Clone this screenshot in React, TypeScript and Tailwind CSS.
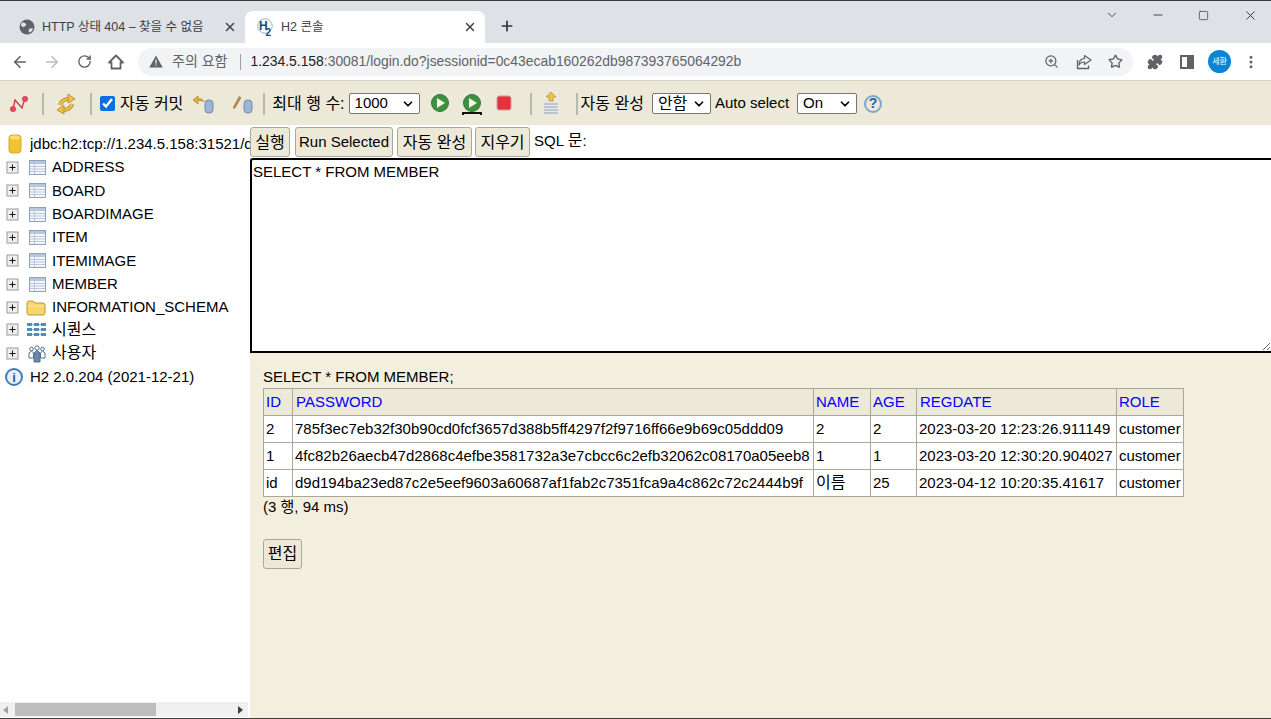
import { ArrowLeft, ArrowRight, ChevronDown, Minus, MoreVertical, Plus, Puzzle, RotateCw, Square, Star, X, ZoomIn } from "lucide-react"

const sans = "font-['Liberation_Sans','Noto_Sans_CJK_KR',sans-serif]"

const tables = ["ADDRESS", "BOARD", "BOARDIMAGE", "ITEM", "ITEMIMAGE", "MEMBER"]

const rows = [
    ["2", "785f3ec7eb32f30b90cd0fcf3657d388b5ff4297f2f9716ff66e9b69c05ddd09", "2", "2", "2023-03-20 12:23:26.911149", "customer"],
    ["1", "4fc82b26aecb47d2868c4efbe3581732a3e7cbcc6c2efb32062c08170a05eeb8", "1", "1", "2023-03-20 12:30:20.904027", "customer"],
    ["id", "d9d194ba23ed87c2e5eef9603a60687af1fab2c7351fca9a4c862c72c2444b9f", "이름", "25", "2023-04-12 10:20:35.41617", "customer"],
]

function Sep({ className }: { className: string }) {
    return <span className={`block shrink-0 w-[2px] h-[22px] bg-[#b9b8ae] ${className}`} />
}

function PlusBox() {
    return (
        <svg width="13" height="13" viewBox="0 0 13 13" className="shrink-0">
            <rect x="1" y="1" width="11" height="11" fill="#eee" stroke="#9a9a9a" />
            <path d="M3.5 6.500h6M6.500 3.500v6" stroke="#111" />
        </svg>
    )
}

function TableIcon() {
    return (
        <svg width="17" height="15" viewBox="0 0 17 15" className="shrink-0">
            <rect x="0.5" y="0.5" width="16" height="14" fill="#f4f6fa" stroke="#8fa3be" />
            <path d="M1 1h15v3H1z" fill="#b8c6da" />
            <path d="M1 6.500h15M1 9h15M1 11.500h15M5.500 4v10" stroke="#bcc8d8" />
        </svg>
    )
}

function Play({ bar, className }: { bar?: boolean; className: string }) {
    return (
        <svg width="24" height="24" viewBox="0 0 24 24" className={`shrink-0 ${className}`}>
            <circle cx="12" cy="11" r="8.500" fill="#3f9142" stroke="#2c7a34" />
            <path d="M9 6l8 5-8 5z" fill="#f2f6ea" />
            {bar && <path d="M3 23v-2h18v2" fill="none" stroke="#111" strokeWidth="2" />}
        </svg>
    )
}

function Cylinder() {
    return <rect x="13" y="6" width="8" height="13" rx="3.500" fill="#9db5d6" stroke="#6f8bb0" />
}

function Btn({ w, className, children }: { w: string; className?: string; children: React.ReactNode }) {
    return (
        <button className={`${w} ${className ?? ""} h-[30px] pt-[1px] shrink-0 bg-[#ece9d8] border border-[#aca899] rounded-[3px] text-black whitespace-nowrap`}>
            {children}
        </button>
    )
}

function Select({ value, w, className }: { value: React.ReactNode; w: string; className: string }) {
    return (
        <span className={`${w} ${className} h-[21px] shrink-0 flex items-center justify-between pl-[5px] pr-[4px] bg-white border border-[#767676] rounded-[2px]`}>
            {value}
            <ChevronDown size={14} strokeWidth={3} />
        </span>
    )
}

export default function App() {
    return (
        <div className={`${sans} w-[1271px] h-[719px] overflow-hidden flex flex-col bg-white text-black border-y border-[#3c3c3c]`}>
            {/* chrome tabs */}
            <div className="h-[42px] shrink-0 flex items-end bg-[#dee1e6] text-[#3c4043]">
                <div className="w-[237px] h-[32px] ml-[8px] flex items-center pl-[11px] pr-[8px] text-[12.5px]">
                    <svg width="16" height="16" viewBox="0 0 16 16" className="shrink-0">
                        <circle cx="8" cy="8" r="7.500" fill="#5f6368" />
                        <path d="M3 3.500c2 0 3 .5 4 1.500s-1 2-2 3-2-2-3.500-1zM10 10c1-1 3-1 4-.5-.5 2-1.500 3.500-3.500 4-1 0-1-2.500-.5-3.500z" fill="#dee1e6" />
                    </svg>
                    <span className="ml-[7px] whitespace-nowrap">HTTP 상태 404 – 찾을 수 없음</span>
                    <X size={14} strokeWidth={2.5} className="ml-auto text-[#444]" />
                </div>
                <div className="w-[240px] h-[32px] flex items-center pl-[12px] pr-[8px] bg-white rounded-t-[8px] text-[12.5px]">
                    <svg width="17" height="18" viewBox="0 0 17 18" className="shrink-0">
                        <circle cx="8" cy="8" r="7.200" fill="#fff" stroke="#8fb4c9" />
                        <text x="2" y="12" fontSize="12" fontWeight="700" fill="#174f73">H</text>
                        <text x="8.500" y="17.500" fontSize="10" fontWeight="700" fill="#174f73">2</text>
                    </svg>
                    <span className="ml-[7px]">H2 콘솔</span>
                    <X size={14} strokeWidth={2.5} className="ml-auto text-[#444]" />
                </div>
                <Plus size={16} strokeWidth={2.5} className="ml-[14px] mb-[9px] text-[#333]" />
                <div className="ml-auto self-start flex items-center h-[28px] text-[#333]">
                    <ChevronDown size={14} strokeWidth={1.5} className="mr-[32px]" />
                    <Minus size={14} strokeWidth={1.5} className="mr-[33px]" />
                    <Square size={11} strokeWidth={1.5} className="mr-[34px]" />
                    <X size={15} strokeWidth={1.5} className="mr-[13px]" />
                </div>
            </div>

            {/* address bar */}
            <div className="h-[37px] shrink-0 flex items-center bg-white text-[#5f6368]">
                <ArrowLeft size={18} strokeWidth={2.2} className="ml-[11px]" />
                <ArrowRight size={18} strokeWidth={2.2} className="ml-[14px] text-[#bcbfc4]" />
                <RotateCw size={15} strokeWidth={2.2} className="ml-[16px]" />
                <svg width="18" height="18" viewBox="0 0 18 18" className="ml-[15px] shrink-0">
                    <path d="M2 9.500 9 2.500l7 7h-2.500v6h-9v-6z" fill="none" stroke="#5f6368" strokeWidth="1.800" strokeLinejoin="round" />
                </svg>
                <div className="w-[995px] h-[28px] ml-[13px] flex items-center rounded-full bg-[#f1f3f4] text-[14px]">
                    <svg width="14" height="13" viewBox="0 0 14 13" className="ml-[11px] shrink-0">
                        <path d="M7 0.500 13.700 12.500H0.300z" fill="#5f6368" />
                        <path d="M6.400 4.500h1.200v4.300H6.400zM6.400 9.600h1.200v1.200H6.400z" fill="#f1f3f4" />
                    </svg>
                    <span className="ml-[9px] whitespace-nowrap">주의 요함</span>
                    <span className="w-px h-[16px] ml-[13px] bg-[#9aa0a6]" />
                    <span className="ml-[9px] whitespace-nowrap text-[13.9px]">
                        <span className="text-[#202124]">1.234.5.158</span>:30081/login.do?jsessionid=0c43ecab160262db987393765064292b
                    </span>
                    <ZoomIn size={15} className="ml-auto" />
                    <svg width="16" height="16" viewBox="0 0 16 16" className="ml-[17px] shrink-0">
                        <path d="M8.500 1.500 15 6l-6.500 4.500V8C5.500 8 4 9 3 11c0-4 2-6.500 5.500-6.500z" fill="none" stroke="#5f6368" strokeWidth="1.200" strokeLinejoin="round" />
                        <path d="M1.500 6v8.500h11V11.500" fill="none" stroke="#5f6368" strokeWidth="1.300" />
                    </svg>
                    <Star size={15} strokeWidth={2.2} className="ml-[16px] mr-[10px]" />
                </div>
                <Puzzle size={16} fill="#5f6368" className="ml-[14px]" />
                <span className="w-[14px] h-[14px] ml-[17px] flex justify-end border-2 border-[#5f6368]"><span className="w-[5px] bg-[#5f6368]" /></span>
                <span className="w-[23px] h-[23px] ml-[14px] flex items-center justify-center rounded-full bg-[#0b84d6] text-white text-[8px]">세환</span>
                <MoreVertical size={16} strokeWidth={2.5} className="ml-[12px]" />
            </div>

            {/* h2 toolbar */}
            <div className="h-[45px] shrink-0 flex items-center pt-[1px] bg-[#ece9d8] border-t border-[#d8d5c6] text-[15px]">
                <svg width="20" height="20" viewBox="0 0 20 20" className="ml-[9px] shrink-0">
                    <path d="M4 15 6 6l7 8 3-10" fill="none" stroke="#c8384a" strokeWidth="1.300" />
                    <circle cx="4" cy="15" r="3" fill="#e0475a" />
                    <circle cx="16" cy="5" r="3" fill="#e0475a" />
                </svg>
                <Sep className="ml-[13px]" />
                <svg width="22" height="22" viewBox="0 0 22 22" className="ml-[11px] shrink-0">
                    <path d="M5 12C6 8 10 6 14 6" fill="none" stroke="#a98522" strokeWidth="4" />
                    <path d="M17 11c-1 4-5 6-9 6" fill="none" stroke="#a98522" strokeWidth="4" />
                    <path d="M5 12C6 8 10 6 14 6" fill="none" stroke="#eec24a" strokeWidth="2.600" />
                    <path d="M17 11c-1 4-5 6-9 6" fill="none" stroke="#eec24a" strokeWidth="2.600" />
                    <path d="M13 1l7 5-7 4z" fill="#eec24a" stroke="#a98522" strokeWidth=".8" />
                    <path d="M9 21l-7-4 7-5z" fill="#eec24a" stroke="#a98522" strokeWidth=".8" />
                </svg>
                <Sep className="ml-[13px]" />
                <input type="checkbox" defaultChecked readOnly className="w-[15px] h-[15px] m-0 ml-[8px] shrink-0 accent-[#0b6fde]" />
                <span className="ml-[5px] text-[16px] whitespace-nowrap">자동 커밋</span>
                <svg width="22" height="20" viewBox="0 0 22 20" className="ml-[9px] shrink-0">
                    <path d="M1 6l5-4v2.500c3 0 5 1 6 3-2-1-4-1-6-1V10z" fill="#e3b23c" stroke="#a98522" strokeWidth=".7" />
                    <Cylinder />
                </svg>
                <svg width="22" height="20" viewBox="0 0 22 20" className="ml-[17px] shrink-0">
                    <path d="M2 13 8 2l2.500 1.500-6 10.500-2.500 1z" fill="#b08a58" />
                    <Cylinder />
                </svg>
                <Sep className="ml-[10px]" />
                <span className="ml-[7px] text-[16px] whitespace-nowrap">최대 행 수:</span>
                <Select value="1000" w="w-[71px]" className="ml-[4px]" />
                <Play className="ml-[8px]" />
                <Play bar className="ml-[8px]" />
                <svg width="20" height="20" viewBox="0 0 20 20" className="ml-[10px] shrink-0">
                    <rect x="3" y="2" width="14" height="14" rx="2" fill="#e8303c" stroke="#c9a0a0" />
                </svg>
                <Sep className="ml-[16px]" />
                <svg width="20" height="26" viewBox="0 0 20 26" className="ml-[9px] shrink-0">
                    <path d="M10 1l5 5h-3v4H8V6H5z" fill="#eec24a" stroke="#b58f2b" strokeWidth=".7" />
                    <path d="M3 13h14M3 16h14M3 19h14M3 22h14" stroke="#a9b8d0" strokeWidth="1.500" />
                </svg>
                <Sep className="ml-[15px]" />
                <span className="ml-[3px] text-[16px] whitespace-nowrap">자동 완성</span>
                <Select value={<span className="text-[16px]">안함</span>} w="w-[59px]" className="ml-[8px]" />
                <span className="ml-[4px] whitespace-nowrap">Auto select</span>
                <Select value="On" w="w-[60px]" className="ml-[8px]" />
                <span className="w-[18px] h-[18px] ml-[7px] shrink-0 flex items-center justify-center rounded-full border-2 border-[#7ea6cf] text-[#2b62a8] text-[14px] font-bold">?</span>
            </div>

            {/* content */}
            <div className="flex-1 min-h-0 flex text-[15px]">
                <div className="w-[250px] shrink-0 flex flex-col bg-white">
                    <div className="flex-1 min-h-0 overflow-hidden pt-[9px]">
                        <div className="h-[20px] flex items-center pl-[8px] whitespace-nowrap">
                            <svg width="14" height="20" viewBox="0 0 14 20" className="shrink-0">
                                <rect x="1" y="1" width="12" height="18" rx="3" fill="#f0c330" stroke="#d6a82a" />
                                <ellipse cx="7" cy="3.500" rx="5" ry="2" fill="#f8e06a" />
                            </svg>
                            <span className="ml-[8px] w-[220px] overflow-hidden">jdbc:h2:tcp://1.234.5.158:31521/d</span>
                        </div>
                        <div className="flex flex-col mt-[2px]">
                            {tables.map((t) => (
                                <div key={t} className="h-[23.3px] flex items-center pl-[6px]">
                                    <PlusBox />
                                    <span className="ml-[10px]"><TableIcon /></span>
                                    <span className="ml-[6px]">{t}</span>
                                </div>
                            ))}
                            <div className="h-[22.8px] flex items-center pl-[6px]">
                                <PlusBox />
                                <svg width="20" height="17" viewBox="0 0 20 17" className="ml-[7px] shrink-0">
                                    <path d="M1 4q0-2 2-2h4l2 2h8q2 0 2 2v8q0 2-2 2H3q-2 0-2-2z" fill="#f6d56b" stroke="#b9973b" />
                                    <path d="M2 7h16" stroke="#fbe9a6" />
                                </svg>
                                <span className="ml-[6px]">INFORMATION_SCHEMA</span>
                            </div>
                            <div className="h-[22.8px] flex items-center pl-[6px]">
                                <PlusBox />
                                <svg width="19" height="15" viewBox="0 0 19 15" className="ml-[8px] shrink-0">
                                    <path d="M0 1h5v3H0zM7 1h5v3H7zM14 1h5v3h-5zM0 6h5v3H0zM7 6h5v3H7zM14 6h5v3h-5zM0 11h5v3H0zM7 11h5v3H7zM14 11h5v3h-5z" fill="#4f8cbf" />
                                    <path d="M5 2.500h2M12 2.500h2M5 7.500h2M12 7.500h2M5 12.500h2M12 12.500h2" stroke="#8fb5d6" />
                                </svg>
                                <span className="ml-[6px] text-[16px]">시퀀스</span>
                            </div>
                            <div className="h-[23.3px] flex items-center pl-[6px]">
                                <PlusBox />
                                <svg width="18" height="19" viewBox="0 0 18 19" className="ml-[9px] shrink-0">
                                    <g fill="#fff" stroke="#4f7094">
                                        <circle cx="3.500" cy="5" r="1.800" />
                                        <circle cx="14.500" cy="5" r="1.800" />
                                        <path d="M1 14V9l2.500-2 2 2v5zM12.500 14V9l2-2 2.500 2v5z" />
                                        <circle cx="9" cy="4" r="2.200" />
                                        <path d="M6 18V9l3-2.500L12 9v9z" fill="#6e88a4" />
                                    </g>
                                </svg>
                                <span className="ml-[6px] text-[16px]">사용자</span>
                            </div>
                            <div className="h-[23.3px] mt-[1px] flex items-center pl-[5px]">
                                <span className="w-[18px] h-[18px] flex items-center justify-center rounded-full border-2 border-[#3f7db8] bg-[#e8f0f8] text-[#1f5f9e] text-[13px] font-bold">i</span>
                                <span className="ml-[7px]">H2 2.0.204 (2021-12-21)</span>
                            </div>
                        </div>
                    </div>
                    <div className="h-[15px] mb-[1px] w-[248px] flex items-center bg-[#f0f0f0]">
                        <span className="ml-[3px] border-y-[4px] border-r-[5px] border-y-transparent border-r-[#a3a3a3]" />
                        <span className="w-[141px] h-[13px] ml-[7px] bg-[#bdbdbd]" />
                        <span className="ml-auto mr-[5px] border-y-[4px] border-l-[5px] border-y-transparent border-l-[#404040]" />
                    </div>
                </div>

                <div className="flex-1 min-w-0 flex flex-col">
                    <div className="h-[33px] shrink-0 flex items-end pb-[1px] bg-white">
                        <Btn w="w-[40px]"><span className="text-[16px]">실행</span></Btn>
                        <Btn w="w-[98px]" className="ml-[5px]">Run Selected</Btn>
                        <Btn w="w-[75px]" className="ml-[4px]"><span className="text-[16px]">자동 완성</span></Btn>
                        <Btn w="w-[55px]" className="ml-[3px]"><span className="text-[16px]">지우기</span></Btn>
                        <span className="ml-[4px] self-center whitespace-nowrap">SQL <span className="text-[16px]">문</span>:</span>
                    </div>
                    <textarea
                        readOnly
                        defaultValue="SELECT * FROM MEMBER"
                        className="h-[195px] w-full block shrink-0 resize border-2 border-r-0 border-black rounded-tl-[3px] px-[1px] py-[1px] outline-none"
                    />
                    <div className="flex-1 bg-[#f3efdf] pl-[13px] pt-[15px]">
                        <div className="h-[20px] pb-[2px] flex items-center">SELECT * FROM MEMBER;</div>
                        <table className="table-fixed w-[921px] border-collapse bg-white border border-[#aca899]">
                            <thead>
                                <tr className="h-[27px] bg-[#ece9d8] text-[#0000ff] text-left">
                                    <th className="w-[29px] px-[2px] font-normal border border-[#aca899]">ID</th>
                                    <th className="w-[521px] pl-[3px] pr-[2px] font-normal border border-[#aca899]">PASSWORD</th>
                                    <th className="w-[57px] px-[2px] font-normal border border-[#aca899]">NAME</th>
                                    <th className="w-[46px] px-[2px] font-normal border border-[#aca899]">AGE</th>
                                    <th className="w-[200px] pl-[3px] pr-[2px] font-normal border border-[#aca899]">REGDATE</th>
                                    <th className="w-[67px] px-[2px] font-normal border border-[#aca899]">ROLE</th>
                                </tr>
                            </thead>
                            <tbody>
                                {rows.map((r) => (
                                    <tr key={r[1]} className="h-[27px]">
                                        {r.map((c, i) => (
                                            <td key={i} className={`px-[2px] border border-[#aca899] whitespace-nowrap ${c === "이름" ? "text-[16px]" : ""}`}>{c}</td>
                                        ))}
                                    </tr>
                                ))}
                            </tbody>
                        </table>
                        <div className="h-[21px] flex items-center">(3 행, 94 ms)</div>
                        <button className="block w-[39px] h-[30px] mt-[21px] bg-[#ece9d8] border border-[#aca899] rounded-[3px] text-[16px]">편집</button>
                    </div>
                </div>
            </div>
        </div>
    )
}
